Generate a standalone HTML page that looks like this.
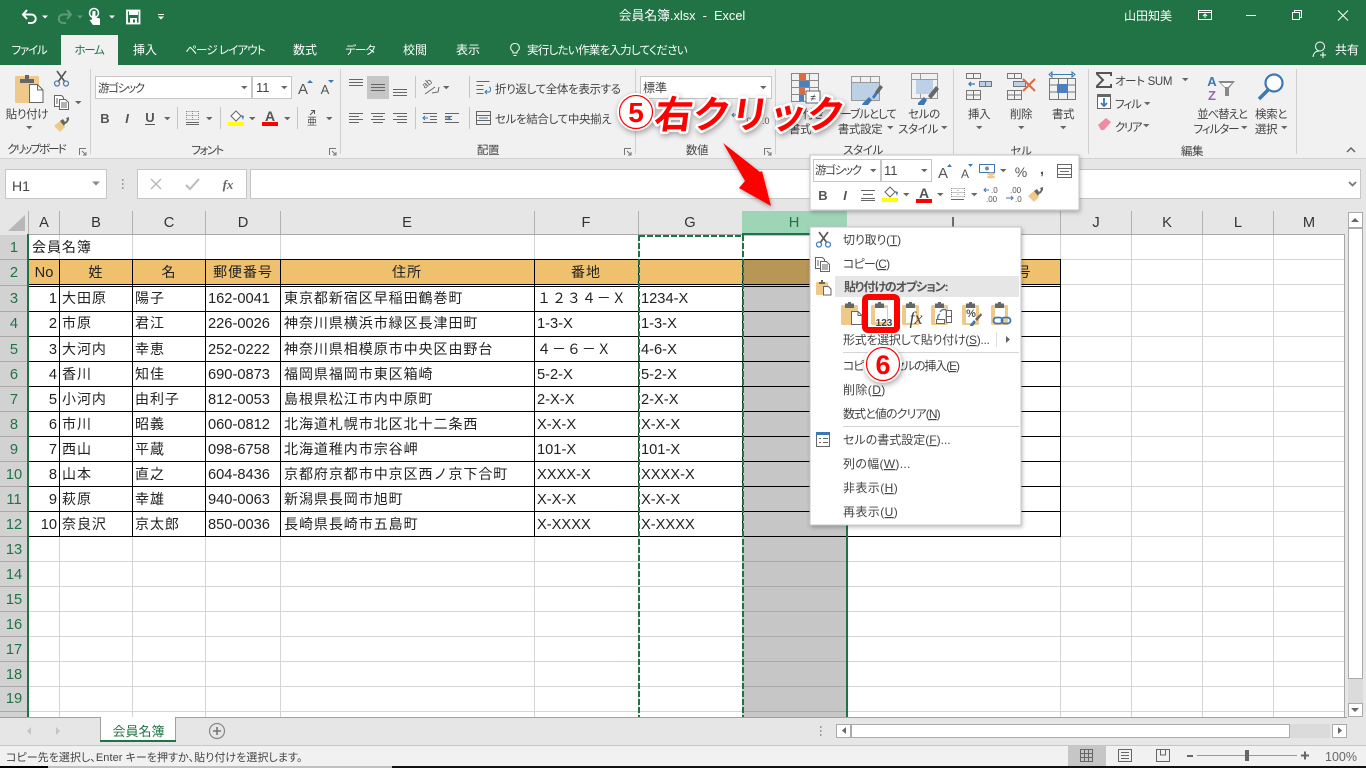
<!DOCTYPE html>
<html lang="ja"><head><meta charset="utf-8"><title>会員名簿.xlsx - Excel</title>
<style>
html,body{margin:0;padding:0;background:#fff;overflow:hidden}
svg{display:block}
text{font-family:"Liberation Sans","Noto Sans CJK JP",sans-serif;font-feature-settings:"palt"}
.u{font-size:11.5px;letter-spacing:-.35px;fill:#444}
.v{font-size:12px;fill:#444}
.w{font-size:12px;fill:#fff}
.tt{font-size:11.5px;fill:#fff;letter-spacing:-.9px}
.c{font-size:14.67px;fill:#222;font-feature-settings:normal}
.k{font-size:14px;fill:#222;letter-spacing:.95px;font-feature-settings:normal}
.h{font-size:14.67px;fill:#333;text-anchor:middle}
.r{font-size:14.67px;fill:#217346;text-anchor:middle}
</style></head><body>
<svg xmlns="http://www.w3.org/2000/svg" width="1366" height="768" viewBox="0 0 1366 768">
<defs>
<path id="tri" d="M0 0h6.5l-3.2 3.2z" fill="#666"/>
<g id="lnch" fill="none" stroke="#777"><path d="M.5 7V.5H7"/><path d="M3 3l4 4M7 4v3H4"/></g>
<g id="scis"><path d="M3 0l8 11M12 0L4 11" stroke="#555" stroke-width="1.6" fill="none"/><circle cx="3" cy="12.5" r="2.5" fill="none" stroke="#4a7fb5" stroke-width="1.3"/><circle cx="12" cy="12.5" r="2.5" fill="none" stroke="#4a7fb5" stroke-width="1.3"/></g>
<g id="copy" fill="#fff" stroke="#666"><path d="M.5.5h7l2 2v9H.5z"/><path d="M5.5 4.500h6l3 3v7h-9z"/><path d="M7 8h6M7 10h6M7 12h6M2 4h2M2 6h2M2 8h2" fill="none"/></g>
<g id="brush"><path d="M0 9l6-5 5 6-5 5z" fill="#eec989"/><path d="M6 4l3-2 2 3 2-2-1-2 3-1v3l-2 3-2 1-1 2z" fill="#666"/></g>
<g id="clip"><rect x="0" y="3" width="17" height="20" rx="1.500" fill="#eec989"/><path d="M4 1.500h3V0h3v1.500h3V6H4z" fill="#666"/></g>
<g id="paper"><path d="M.5.5h6.500l4 4v9H.5z" fill="#fff" stroke="#666"/><path d="M7 .5v4h4" fill="none" stroke="#666"/></g>
</defs>

<!-- title bar -->
<rect width="1366" height="65" fill="#217346"/>
<path d="M27 10l-4 4.500 4 4.500M23 14.500h8.500a4.200 4.200 0 0 1 0 8.500H28" fill="none" stroke="#fff" stroke-width="2"/>
<path d="M42 15.500h6l-3 3z" fill="#fff"/>
<path d="M67 10l4 4.500-4 4.500M71 14.500h-8a4.200 4.200 0 0 0 0 8.500h3" fill="none" stroke="#5d9a7b" stroke-width="2"/>
<path d="M77 15.500h6l-3 3z" fill="#5d9a7b"/>
<circle cx="94" cy="13" r="4.500" fill="none" stroke="#fff" stroke-width="1.500"/>
<path d="M92.500 11h3v6.500l4.500 1v6.500h-7l-3.500-5 2.500-.5z" fill="#fff"/>
<path d="M109 15.500h6l-3 3z" fill="#fff"/>
<rect x="127" y="10.500" width="12.500" height="13" fill="none" stroke="#fff" stroke-width="1.800"/>
<rect x="129" y="10" width="9" height="5" fill="#fff"/><rect x="130" y="18" width="7" height="5.500" fill="#fff"/><rect x="133" y="19.500" width="2" height="3" fill="#217346"/>
<path d="M158 14h6v1h-6zM158 16.500h6l-3 3z" fill="#fff"/>
<text x="682" y="20" text-anchor="middle" xml:space="preserve" style="font-size:12.8px;fill:#fff">会員名簿.xlsx  -  Excel</text>
<text class="w" x="1124" y="20">山田知美</text>
<path d="M1198.500 10.500h13v9h-13zM1198.500 12.500h13M1205 18v-4M1203 16l2-2 2 2" fill="none" stroke="#fff"/>
<rect x="1246" y="15" width="10" height="1" fill="#fff"/>
<path d="M1292.500 12.500h7v7h-7zM1294.500 12.500v-2h7v7h-2" fill="none" stroke="#fff"/>
<path d="M1338 10.500l10 10M1348 10.500l-10 10" stroke="#fff" fill="none"/>

<!-- tabs -->
<rect x="61" y="35" width="57" height="30" fill="#f1f1f1"/>
<text class="tt" x="29" y="54" text-anchor="middle" style="letter-spacing:-1.2px">ファイル</text>
<text x="89" y="54" text-anchor="middle" style="font-size:11.5px;letter-spacing:-1.3px;fill:#217346">ホーム</text>
<text class="w" x="145" y="54" text-anchor="middle">挿入</text>
<text class="tt" x="225" y="54" text-anchor="middle">ページ レイアウト</text>
<text class="w" x="305" y="54" text-anchor="middle">数式</text>
<text class="tt" x="360" y="54" text-anchor="middle">データ</text>
<text class="w" x="415" y="54" text-anchor="middle">校閲</text>
<text class="w" x="468" y="54" text-anchor="middle">表示</text>
<path d="M513 53v-1.500c-4-2.500-2.500-8 2-8s6 5.500 2 8V53zM513.500 55.500h3" fill="none" stroke="#fff"/>
<text class="tt" x="527" y="54" style="letter-spacing:-.72px">実行したい作業を入力してください</text>
<circle cx="1320" cy="46.500" r="4.500" fill="none" stroke="#fff"/>
<path d="M1313 57c.5-4 3-6 6-6M1323 52v6M1320 55h6" fill="none" stroke="#fff"/>
<text class="w" x="1335" y="54">共有</text>

<!-- ribbon -->
<rect y="65" width="1366" height="93" fill="#f1f1f1"/>
<rect y="158" width="1366" height="1" fill="#d2d2d2"/>
<path d="M90.500 69v85M340.500 69v85M635.500 69v85M775.500 69v85M953.500 69v85M1088.500 69v85M1296.500 69v85" stroke="#d0d0d0" fill="none"/>

<!-- clipboard -->
<rect x="15" y="76" width="24" height="27" rx="1.500" fill="#eec989"/>
<path d="M20 79h5v-4h4v4h5v4H20z" fill="#666"/>
<path d="M29.500 84.500h8l5.500 5.500v12.500H29.500z" fill="#fff" stroke="#666"/><path d="M37.500 84.500V90H43" fill="none" stroke="#666"/>
<text class="u" x="27" y="118" text-anchor="middle">貼り付け</text>
<use href="#tri" x="26" y="126"/>
<use href="#scis" x="54" y="71"/>
<use href="#copy" x="54" y="95"/>
<use href="#tri" x="75" y="101"/>
<use href="#brush" x="54" y="117"/>
<text class="u" x="36" y="153" text-anchor="middle" style="letter-spacing:-1.9px">クリップボード</text>
<use href="#lnch" x="79" y="148"/>

<!-- font -->
<rect x="95.500" y="76.500" width="156" height="22" fill="#fff" stroke="#c6c6c6"/>
<rect x="252.500" y="76.500" width="39" height="22" fill="#fff" stroke="#c6c6c6"/>
<text class="u" x="98" y="92" style="letter-spacing:-1.300px">游ゴシック</text><use href="#tri" x="241" y="86"/>
<text class="u" x="256" y="92" style="font-size:13px;letter-spacing:0">11</text><use href="#tri" x="281" y="86"/>
<text x="303" y="94" text-anchor="middle" style="font-size:15px;fill:#555">A</text><path d="M307 83h6l-3-3z" fill="#3c78b4"/>
<text x="325" y="94" text-anchor="middle" style="font-size:13px;fill:#555">A</text><path d="M328 80h6l-3 3z" fill="#3c78b4"/>
<text x="105" y="123" text-anchor="middle" style="font-size:13px;font-weight:700;fill:#555">B</text>
<text x="127" y="123" text-anchor="middle" style="font-size:13px;font-style:italic;font-weight:700;fill:#555">I</text>
<text x="150" y="122" text-anchor="middle" style="font-size:13px;font-weight:700;fill:#555">U</text><rect x="145" y="124" width="10" height="1" fill="#555"/>
<use href="#tri" x="164" y="117"/>
<path d="M177.500 107v22M220.500 107v22M297.500 107v22" stroke="#c6c6c6" fill="none"/>
<path d="M186.500 111.500h12M186.500 115.500h12M186.500 119.500h12M186.500 111v9M192.500 111v9M198.500 111v9" stroke="#888" stroke-dasharray="1 1" fill="none"/><path d="M186 122.500h13M186 124.500h13" stroke="#666" fill="none"/>
<use href="#tri" x="206" y="117"/>
<path d="M231 116l5-5 5 5-5 5z" fill="#fff" stroke="#666"/><path d="M241 115l3 1-1 4z" fill="#3c78b4"/>
<rect x="228" y="122" width="16" height="4" fill="#ff0"/>
<use href="#tri" x="249" y="117"/>
<text x="270" y="121" text-anchor="middle" style="font-size:14px;fill:#555;font-weight:700">A</text>
<rect x="262" y="122" width="16" height="4" fill="#f00"/>
<use href="#tri" x="284" y="117"/>
<text x="312" y="125" text-anchor="middle" style="font-size:10px;fill:#555">亜</text><path d="M310 115l4-4M311 110.500h3.500v3.500" stroke="#555" fill="none"/>
<use href="#tri" x="326" y="117"/>
<text class="u" x="207" y="154" text-anchor="middle" style="letter-spacing:-1.6px">フォント</text>
<use href="#lnch" x="329" y="148"/>

<!-- align -->
<rect x="367" y="76" width="22" height="23" fill="#c6c6c6"/>
<g stroke="#666" fill="none">
<path d="M349 79.500h14M349 82.500h14M349 85.500h14"/>
<path d="M371 84.500h14M371 87.500h14M371 90.500h14"/>
<path d="M393 89.500h14M393 92.500h14M393 95.500h14"/>
<path d="M349 113.500h14M349 116.500h10M349 119.500h14M349 122.500h10"/>
<path d="M371 113.500h14M373 116.500h10M371 119.500h14M373 122.500h10"/>
<path d="M393 113.500h14M397 116.500h10M393 119.500h14M397 122.500h10"/>
<path d="M423 113.500h14M430 116.500h7M430 119.500h7M423 122.500h14"/>
<path d="M445 113.500h14M445 116.500h7M445 119.500h7M445 122.500h14"/>
<path d="M415.500 76v22M415.500 107v22M469.500 76v22M469.500 107v22" stroke="#c6c6c6"/>
<path d="M425 94l10-7M432 93l6-1 1-5"/>
</g>
<text transform="translate(425 89) rotate(-40)" style="font-size:9px;fill:#555">ab</text>
<path d="M423 118h5M425 116l-2 2 2 2" stroke="#3c78b4" fill="none"/>
<path d="M445 118h5M448 116l2 2-2 2" stroke="#3c78b4" fill="none"/>
<use href="#tri" x="443" y="86"/>
<path d="M476.500 81.500h13M476.500 85.500h7M476.500 89.500h7M476.500 93.500h7" stroke="#666" fill="none"/><path d="M487 90l-2 2 2 2M485 92h4c2 0 2-5 0-5" stroke="#3c78b4" fill="none"/>
<text class="u" x="495" y="93">折り返して全体を表示する</text>
<rect x="476.500" y="111.500" width="14" height="13" fill="none" stroke="#666"/><path d="M476 115.500h15M476 120.500h15" stroke="#666"/><path d="M479 118h9" stroke="#3c78b4"/>
<text class="u" x="495" y="123">セルを結合して中央揃え</text>
<use href="#tri" x="621" y="117"/>
<text class="u" x="488" y="154" text-anchor="middle">配置</text>
<use href="#lnch" x="624" y="148"/>

<!-- number -->
<rect x="640.500" y="76.500" width="131" height="22" fill="#fff" stroke="#c6c6c6"/>
<text class="v" x="643" y="92">標準</text><use href="#tri" x="760" y="86"/>
<text x="744" y="124" style="font-size:9px;fill:#555">.00</text><text x="762" y="124" style="font-size:9px;fill:#555">.0</text>
<path d="M732 115h8M734 113l-2 2 2 2" stroke="#3c78b4" fill="none"/>
<text class="u" x="697" y="154" text-anchor="middle">数値</text>
<use href="#lnch" x="764" y="148"/>

<!-- styles -->
<g fill="none" stroke="#888"><path d="M791.500 73.500h27v28h-27zM791.500 80.500h27M791.500 87.500h27M791.500 94.500h27M800.500 73v29M809.500 73v29"/></g>
<rect x="799" y="74" width="7" height="6" fill="#de6a3e"/><rect x="799" y="81" width="10" height="6" fill="#4a80bd"/><rect x="799" y="88" width="6" height="6" fill="#de6a3e"/><rect x="799" y="95" width="5" height="6" fill="#4a80bd"/>
<rect x="806" y="91" width="14" height="12" fill="#fff" stroke="#666"/><text x="813" y="101" text-anchor="middle" style="font-size:10px;fill:#333">≠</text>
<text class="u" x="813" y="118" text-anchor="middle">付き</text>
<text class="u" x="800" y="133" text-anchor="middle">書式</text>
<g fill="none" stroke="#999"><path d="M851.500 76.500h28v24h-28zM851.500 82.500h28M851.500 88.500h28M851.500 94.500h28M860.500 76v25M870.500 76v25"/></g>
<rect x="852" y="83" width="27" height="17" fill="#bcd0e6"/>
<path d="M863 103l6-6 3 3-4 5h-6zM872 97l7-10 2 2-7 10z" fill="#3c78b4"/><path d="M875 92l5-7 3 2-5 7z" fill="#666"/>
<text class="u" x="896" y="118" text-anchor="end" style="letter-spacing:-1px">テーブルとして</text>
<text class="u" x="860" y="133" text-anchor="middle">書式設定</text><use href="#tri" x="887" y="126"/>
<g fill="none" stroke="#999"><path d="M911.500 73.500h26v25h-26zM911.500 79.500h26M920.500 73v26"/></g>
<rect x="916" y="80" width="17" height="14" fill="#bcd0e6"/>
<path d="M918 103l6-6 3 3-3 5h-6z" fill="#3c78b4"/><path d="M928 96l8-10 3 3-8 10z" fill="#666"/>
<text class="u" x="924" y="118" text-anchor="middle">セルの</text>
<text class="u" x="918" y="133" text-anchor="middle">スタイル</text><use href="#tri" x="941" y="126"/>
<text class="u" x="863" y="154" text-anchor="middle">スタイル</text>

<!-- cells -->
<g fill="none" stroke="#777">
<path d="M966.500 73.500h14v5h-14zM973.500 73v5M966.500 90.500h14v9h-14zM966.500 95h14M973.500 90v10"/>
<path d="M979.500 81.500h12v5h-12zM985.500 81v6" fill="#bcd0e6"/>
<path d="M1007.500 73.500h14v5h-14zM1014.500 73v5M1007.500 90.500h14v9h-14zM1007.500 95h14M1014.500 90v10"/>
<path d="M1013.500 81.500h12v5h-12z" fill="#bcd0e6"/>
<path d="M1049.500 78.500h26v21h-26zM1058.500 78v21M1067.500 78v21M1049.500 85h26M1049.500 92h26"/>
</g>
<path d="M975 84h-6M971 82l-2 2 2 2" fill="none" stroke="#3c78b4" stroke-width="1.300"/>
<path d="M1023 79l12 12M1035 79l-12 12" stroke="#de6a3e" stroke-width="2"/>
<rect x="1057" y="84" width="10" height="9" fill="#4a80bd"/>
<path d="M1051 74.500h22M1049 74.500l3-2.500v5zM1075 74.500l-3-2.500v5z" stroke="#3c78b4" fill="none"/>
<text class="u" x="979" y="118" text-anchor="middle">挿入</text><use href="#tri" x="976" y="126"/>
<text class="u" x="1021" y="118" text-anchor="middle">削除</text><use href="#tri" x="1018" y="126"/>
<text class="u" x="1063" y="118" text-anchor="middle">書式</text><use href="#tri" x="1060" y="126"/>
<text class="u" x="1021" y="155" text-anchor="middle">セル</text>

<!-- edit -->
<path d="M1111 76v-3h-14v1l6 6-6 6v1h14v-3" fill="none" stroke="#555" stroke-width="2"/>
<text class="u" x="1115" y="85">オート SUM</text><use href="#tri" x="1182" y="78"/>
<rect x="1097.500" y="94.500" width="13" height="14" fill="#fff" stroke="#666"/><rect x="1097" y="94" width="14" height="3" fill="#666"/>
<path d="M1104 98v8M1101 103l3 3 3-3" fill="none" stroke="#3c78b4" stroke-width="1.800"/>
<text class="u" x="1115" y="108" style="letter-spacing:-1.100px">フィル</text><use href="#tri" x="1144" y="102"/>
<path d="M1098 125l8-7 5 4-7 8h-3z" fill="#ee8ca0"/>
<text class="u" x="1115" y="131" style="letter-spacing:-1.500px">クリア</text><use href="#tri" x="1143" y="124"/>
<text x="1212" y="86" text-anchor="middle" style="font-size:13px;font-weight:700;fill:#3c78b4">A</text>
<text x="1212" y="100" text-anchor="middle" style="font-size:13px;font-weight:700;fill:#9966bb">Z</text>
<path d="M1218 81h17l-6 7v8h-4v-8z" fill="#888"/><path d="M1221 83h11l-4 4h-3z" fill="#fff"/>
<text class="u" x="1222" y="118" text-anchor="middle" style="letter-spacing:-1.100px">並べ替えと</text>
<text class="u" x="1216" y="133" text-anchor="middle" style="letter-spacing:-1.100px">フィルター</text><use href="#tri" x="1241" y="126"/>
<circle cx="1274" cy="83" r="8.500" fill="#fff" stroke="#3c78b4" stroke-width="2.200"/>
<path d="M1268 90l-9 9" stroke="#3c78b4" stroke-width="3.500"/>
<text class="u" x="1271" y="118" text-anchor="middle">検索と</text>
<text class="u" x="1266" y="133" text-anchor="middle">選択</text><use href="#tri" x="1281" y="126"/>
<text class="u" x="1192" y="155" text-anchor="middle">編集</text>
<path d="M1347 152l4-4 4 4" fill="none" stroke="#666" stroke-width="1.500"/>

<!-- formula bar -->
<rect y="159" width="1366" height="52" fill="#e6e6e6"/>
<rect x="5.500" y="169.500" width="101" height="29" fill="#fff" stroke="#c6c6c6"/>
<text x="12" y="191" style="font-size:14px;fill:#444">H1</text>
<path d="M92 181.500h8l-4 4z" fill="#888"/>
<path d="M122 179h1.500v2H122zM122 183h1.500v2H122zM122 187h1.500v2H122z" fill="#999"/>
<rect x="137.500" y="169.500" width="109" height="29" fill="#fff" stroke="#c6c6c6"/>
<path d="M151 179l10 10M161 179l-10 10" stroke="#bbb" stroke-width="1.500"/>
<path d="M186 185l4 4 9-10" fill="none" stroke="#bbb" stroke-width="2"/>
<text x="228" y="189" text-anchor="middle" style="font-family:'Liberation Serif',serif;font-size:13px;font-style:italic;font-weight:700;fill:#666">fx</text>
<rect x="250.500" y="169.500" width="1110" height="29" fill="#fff" stroke="#c6c6c6"/>
<path d="M1349 182l3.500 3.500 3.500-3.500" fill="none" stroke="#777" stroke-width="1.800"/>

<!-- column headers -->
<rect y="211" width="1345" height="24" fill="#e6e6e6"/>
<path d="M8 231l17-16v16z" fill="#b7b7b7"/>
<rect x="742" y="211" width="105" height="22" fill="#9fd5b7"/>
<rect x="28" y="234" width="1317" height="1" fill="#a8a8a8"/>
<rect x="742" y="233" width="105" height="2" fill="#217346"/>
<path d="M28.500 211v23M59.500 211v23M132.500 211v23M205.500 211v23M280.500 211v23M534.500 211v23M638.500 211v23M1060.500 211v23M1131.500 211v23M1202.500 211v23M1273.500 211v23" stroke="#b1b1b1" fill="none"/>
<text class="h" x="44" y="227">A</text><text class="h" x="96" y="227">B</text><text class="h" x="169" y="227">C</text><text class="h" x="243" y="227">D</text><text class="h" x="407" y="227">E</text><text class="h" x="586" y="227">F</text><text class="h" x="690" y="227">G</text>
<text class="h" x="794" y="227" style="fill:#217346">H</text>
<text class="h" x="953" y="227">I</text><text class="h" x="1096" y="227">J</text><text class="h" x="1167" y="227">K</text><text class="h" x="1238" y="227">L</text><text class="h" x="1309" y="227">M</text>

<!-- sheet -->
<rect x="29" y="235" width="1316" height="482" fill="#fff"/>
<rect y="235" width="27" height="482" fill="#d2d2d2"/>
<rect x="27" y="234" width="2" height="483" fill="#217346"/>
<rect x="742" y="235" width="105" height="482" fill="#c6c6c6"/>
<rect x="743" y="236" width="103" height="23" fill="#fff"/>
<rect x="59" y="260" width="1001" height="25" fill="#efc16f"/>
<rect x="29" y="260" width="31" height="25" fill="#efc16f"/>
<rect x="743" y="260" width="103" height="24" fill="#b89656"/>
<!-- light grid -->
<g fill="none" stroke="#d4d4d4">
<path d="M59.500 235V259M132.500 235V259M205.500 235V259M280.500 235V259M534.500 235V259M638.500 235V259M1060.500 235V717M1131.500 235V717M1202.500 235V717M1273.500 235V717M1344.500 235V717"/>
<path d="M59.500 537V717M132.500 537V717M205.500 537V717M280.500 537V717M534.500 537V717M638.500 537V717"/>
<path d="M846 259.500H1345M846 284.500H1345M846 311.500H1345M846 336.500H1345M846 361.500H1345M846 386.500H1345M846 411.500H1345M846 436.500H1345M846 461.500H1345M846 486.500H1345M846 511.500H1345M29 259.500H1060"/>
<path d="M29 561.500H742M29 586.500H742M29 611.500H742M29 636.500H742M29 661.500H742M29 686.500H742M29 711.500H742M29 536.500H742M846 536.500H1345M846 561.500H1345M846 586.500H1345M846 611.500H1345M846 636.500H1345M846 661.500H1345M846 686.500H1345M846 711.500H1345"/>
</g>
<path d="M742 561.500H846M742 586.500H846M742 611.500H846M742 636.500H846M742 661.500H846M742 686.500H846M742 711.500H846" stroke="#aaa" fill="none"/>
<path d="M0 259.500H27M0 285.500H27M0 311.500H27M0 336.500H27M0 361.500H27M0 386.500H27M0 411.500H27M0 436.500H27M0 461.500H27M0 486.500H27M0 511.500H27M0 536.500H27M0 561.500H27M0 586.500H27M0 611.500H27M0 636.500H27M0 661.500H27M0 686.500H27M0 711.500H27" stroke="#aaa" fill="none"/>
<!-- table -->
<g fill="none" stroke="#000">
<path d="M29 259.500H1061M29 284.500H1061M29 286.500H1061M29 311.500H1061M29 336.500H1061M29 361.500H1061M29 386.500H1061M29 411.500H1061M29 436.500H1061M29 461.500H1061M29 486.500H1061M29 511.500H1061M29 536.500H1061"/>
<path d="M59.500 259V537M132.500 259V537M205.500 259V537M280.500 259V537M534.500 259V537M638.500 259V537M742.500 259V537M846.500 259V537M1060.500 259V537"/>
</g>
<!-- copy marquee -->
<g fill="none" stroke="#217346" stroke-width="2" stroke-dasharray="6 2">
<path d="M639 235V717"/><path d="M743 235V717"/><path d="M639 236H743"/>
</g>
<rect x="846" y="235" width="2" height="482" fill="#217346"/>

<!-- row numbers -->
<text class="r" x="14" y="252">1</text><text class="r" x="14" y="277">2</text><text class="r" x="14" y="303">3</text><text class="r" x="14" y="328">4</text><text class="r" x="14" y="354">5</text><text class="r" x="14" y="379">6</text><text class="r" x="14" y="404">7</text><text class="r" x="14" y="429">8</text><text class="r" x="14" y="454">9</text><text class="r" x="14" y="479">10</text><text class="r" x="14" y="504">11</text><text class="r" x="14" y="529">12</text><text class="r" x="14" y="554">13</text><text class="r" x="14" y="579">14</text><text class="r" x="14" y="604">15</text><text class="r" x="14" y="629">16</text><text class="r" x="14" y="654">17</text><text class="r" x="14" y="679">18</text><text class="r" x="14" y="703">19</text>

<!-- cell text -->
<text class="k" x="32" y="252">会員名簿</text>
<text class="c" x="44" y="277" text-anchor="middle">No</text>
<text class="k" x="96" y="277" text-anchor="middle">姓</text>
<text class="k" x="169" y="277" text-anchor="middle">名</text>
<text class="k" x="243" y="277" text-anchor="middle">郵便番号</text>
<text class="k" x="407" y="277" text-anchor="middle">住所</text>
<text class="k" x="586" y="277" text-anchor="middle">番地</text>
<text class="k" x="1024" y="277" text-anchor="middle">号</text>

<g text-anchor="end">
<text class="c" x="57" y="303">1</text><text class="c" x="57" y="328">2</text><text class="c" x="57" y="354">3</text><text class="c" x="57" y="379">4</text><text class="c" x="57" y="404">5</text><text class="c" x="57" y="429">6</text><text class="c" x="57" y="454">7</text><text class="c" x="57" y="479">8</text><text class="c" x="57" y="504">9</text><text class="c" x="57" y="529">10</text>
</g>
<text class="k" x="62" y="303">大田原</text><text class="k" x="135" y="303">陽子</text><text class="c" x="208" y="303">162-0041</text><text class="k" x="284" y="303">東京都新宿区早稲田鶴巻町</text><text class="k" x="537" y="303">１２３４－Ｘ</text><text class="c" x="641" y="303">1234-X</text>
<text class="k" x="62" y="328">市原</text><text class="k" x="135" y="328">君江</text><text class="c" x="208" y="328">226-0026</text><text class="k" x="284" y="328">神奈川県横浜市緑区長津田町</text><text class="c" x="537" y="328">1-3-X</text><text class="c" x="641" y="328">1-3-X</text>
<text class="k" x="62" y="354">大河内</text><text class="k" x="135" y="354">幸恵</text><text class="c" x="208" y="354">252-0222</text><text class="k" x="284" y="354">神奈川県相模原市中央区由野台</text><text class="k" x="537" y="354">４－６－Ｘ</text><text class="c" x="641" y="354">4-6-X</text>
<text class="k" x="62" y="379">香川</text><text class="k" x="135" y="379">知佳</text><text class="c" x="208" y="379">690-0873</text><text class="k" x="284" y="379">福岡県福岡市東区箱崎</text><text class="c" x="537" y="379">5-2-X</text><text class="c" x="641" y="379">5-2-X</text>
<text class="k" x="62" y="404">小河内</text><text class="k" x="135" y="404">由利子</text><text class="c" x="208" y="404">812-0053</text><text class="k" x="284" y="404">島根県松江市内中原町</text><text class="c" x="537" y="404">2-X-X</text><text class="c" x="641" y="404">2-X-X</text>
<text class="k" x="62" y="429">市川</text><text class="k" x="135" y="429">昭義</text><text class="c" x="208" y="429">060-0812</text><text class="k" x="284" y="429">北海道札幌市北区北十二条西</text><text class="c" x="537" y="429">X-X-X</text><text class="c" x="641" y="429">X-X-X</text>
<text class="k" x="62" y="454">西山</text><text class="k" x="135" y="454">平蔵</text><text class="c" x="208" y="454">098-6758</text><text class="k" x="284" y="454">北海道稚内市宗谷岬</text><text class="c" x="537" y="454">101-X</text><text class="c" x="641" y="454">101-X</text>
<text class="k" x="62" y="479">山本</text><text class="k" x="135" y="479">直之</text><text class="c" x="208" y="479">604-8436</text><text class="k" x="284" y="479">京都府京都市中京区西ノ京下合町</text><text class="c" x="537" y="479">XXXX-X</text><text class="c" x="641" y="479">XXXX-X</text>
<text class="k" x="62" y="504">萩原</text><text class="k" x="135" y="504">幸雄</text><text class="c" x="208" y="504">940-0063</text><text class="k" x="284" y="504">新潟県長岡市旭町</text><text class="c" x="537" y="504">X-X-X</text><text class="c" x="641" y="504">X-X-X</text>
<text class="k" x="62" y="529">奈良沢</text><text class="k" x="135" y="529">京太郎</text><text class="c" x="208" y="529">850-0036</text><text class="k" x="284" y="529">長崎県長崎市五島町</text><text class="c" x="537" y="529">X-XXXX</text><text class="c" x="641" y="529">X-XXXX</text>

<!-- vertical scrollbar -->
<rect x="1345" y="211" width="21" height="506" fill="#e6e6e6"/>
<rect x="1344" y="234" width="1" height="483" fill="#a8a8a8"/>
<rect x="1348" y="228" width="15" height="475" fill="#dbdbdb"/>
<rect x="1348.500" y="212.500" width="14" height="15" fill="#fff" stroke="#ababab"/>
<path d="M1351 222h8l-4-4z" fill="#666"/>
<rect x="1348.500" y="228.500" width="14" height="450" fill="#fff" stroke="#ababab"/>
<rect x="1348.500" y="703.500" width="14" height="13" fill="#fff" stroke="#ababab"/>
<path d="M1351 708h8l-4 4z" fill="#666"/>

<!-- sheet tabs -->
<rect y="717" width="1366" height="28" fill="#e6e6e6"/>
<rect y="717" width="1347" height="1" fill="#a0a0a0"/>
<path d="M31 727v8l-4-4zM56 727v8l4-4z" fill="#c4c4c4"/>
<rect x="100" y="717" width="76" height="25" fill="#fff"/>
<path d="M100.500 717v25M175.500 717v25" stroke="#a0a0a0" fill="none"/>
<rect x="100" y="740" width="76" height="2" fill="#217346"/>
<text x="138.500" y="736" text-anchor="middle" style="font-size:13px;fill:#217346;font-feature-settings:normal">会員名簿</text>
<circle cx="217" cy="731" r="7.500" fill="none" stroke="#888" stroke-width="1.200"/><path d="M213 731h8M217 727v8" stroke="#777" stroke-width="1.600"/>
<path d="M820 726h1.500v2H820zM820 730h1.500v2H820zM820 734h1.500v2H820z" fill="#999"/>
<rect x="851" y="724" width="479" height="14" fill="#dbdbdb"/>
<rect x="836.500" y="724.500" width="14" height="13" fill="#fff" stroke="#ababab"/><path d="M846 727v7l-4-3.500z" fill="#666"/>
<rect x="851.500" y="724.500" width="438" height="13" fill="#fff" stroke="#ababab"/>
<rect x="1332.500" y="724.500" width="14" height="13" fill="#fff" stroke="#ababab"/><path d="M1338 727v7l4-3.500z" fill="#666"/>

<!-- status bar -->
<rect y="745" width="1366" height="21" fill="#f1f1f1"/>
<rect y="745" width="1366" height="1" fill="#c6c6c6"/>
<rect y="766" width="1366" height="2" fill="#c0c0c0"/>
<rect y="766" width="48" height="2" fill="#000"/><rect x="392" y="766" width="974" height="2" fill="#111"/>
<text x="6" y="761" style="font-size:11px;letter-spacing:.05px;fill:#444">コピー先を選択し、Enter キーを押すか、貼り付けを選択します。</text>
<rect x="1068" y="746" width="38" height="20" fill="#c6c6c6"/>
<path d="M1080.500 749.500h12v12h-12zM1080.500 753.500h12M1080.500 757.500h12M1084.500 749v13M1088.500 749v13" fill="none" stroke="#666"/>
<path d="M1118.500 749.500h13v12h-13zM1121 752.500h8M1121 755.500h8M1121 758.500h8" fill="none" stroke="#666"/>
<path d="M1156.500 749.500h13v12h-13zM1160.500 749v6h5v-6" fill="none" stroke="#666"/>
<rect x="1187" y="755" width="6" height="2" fill="#666"/>
<rect x="1197" y="755" width="100" height="1" fill="#999"/>
<rect x="1245" y="750" width="4" height="11" fill="#666"/>
<path d="M1301 755.500h8M1305 751.500v8" stroke="#666" stroke-width="2"/>
<text x="1325" y="761" style="font-size:12.5px;fill:#666">100%</text>

<!-- mini toolbar -->
<rect x="810" y="155" width="269" height="55" fill="#fff" stroke="#c6c6c6" style="filter:drop-shadow(1px 2px 2px rgba(0,0,0,.25))"/>
<rect x="813.500" y="159.500" width="67" height="22" fill="#fff" stroke="#c6c6c6"/>
<rect x="881.500" y="159.500" width="50" height="22" fill="#fff" stroke="#c6c6c6"/>
<text class="u" x="815" y="174" style="letter-spacing:-1.300px">游ゴシック</text><use href="#tri" x="870" y="169"/>
<text class="u" x="884" y="175" style="font-size:13px;letter-spacing:0">11</text><use href="#tri" x="921" y="169"/>
<text x="943" y="178" text-anchor="middle" style="font-size:15px;fill:#555">A</text><path d="M947 167h5l-2.500-3z" fill="#3c78b4"/>
<text x="965" y="178" text-anchor="middle" style="font-size:12px;fill:#555">A</text><path d="M968 164h5l-2.500 3z" fill="#3c78b4"/>
<rect x="979.500" y="164.500" width="15" height="8" fill="#fff" stroke="#3c78b4"/><circle cx="987" cy="168.500" r="2" fill="#888"/><ellipse cx="991" cy="174" rx="4" ry="1.500" fill="#eec989"/><ellipse cx="991" cy="177" rx="4" ry="1.500" fill="#eec989"/>
<use href="#tri" x="1000" y="169"/>
<text x="1021" y="177" text-anchor="middle" style="font-size:14px;fill:#555">%</text>
<text x="1042" y="174" text-anchor="middle" style="font-size:15px;font-weight:700;fill:#555">,</text>
<rect x="1057.500" y="164.500" width="14" height="13" fill="#fff" stroke="#666"/><path d="M1057 168.500h15M1057 174.500h15" stroke="#666"/><path d="M1060 171.500h9" stroke="#3c78b4"/>
<text x="823" y="200" text-anchor="middle" style="font-size:13px;font-weight:700;fill:#555">B</text>
<text x="845" y="200" text-anchor="middle" style="font-size:13px;font-weight:700;font-style:italic;fill:#555">I</text>
<path d="M861 190.500h14M863 194.500h10M861 198.500h14M861 200.500h14" stroke="#666" fill="none"/>
<path d="M885 192l5-5 5 5-5 5z" fill="#fff" stroke="#666"/><path d="M895 191l3 1-1 4z" fill="#3c78b4"/>
<rect x="882" y="198" width="16" height="4" fill="#ff0"/>
<use href="#tri" x="903" y="193"/>
<text x="924" y="198" text-anchor="middle" style="font-size:14px;font-weight:700;fill:#555">A</text>
<rect x="916" y="199" width="16" height="4" fill="#f00"/>
<use href="#tri" x="937" y="193"/>
<path d="M951.500 188.500h13M951.500 192.500h13M951.500 196.500h13M951.500 188v9M958 188v9M964.500 188v9" stroke="#888" stroke-dasharray="1 1" fill="none"/><path d="M951 199.500h13" stroke="#666" fill="none"/>
<use href="#tri" x="971" y="193"/>
<path d="M984 190h5M986 188l-2 2 2 2" stroke="#3c78b4" fill="none"/><text x="991" y="193" style="font-size:8px;fill:#555">.0</text><text x="986" y="202" style="font-size:8px;fill:#555">.00</text>
<text x="1010" y="193" style="font-size:8px;fill:#555">.00</text><path d="M1006 198h7M1011 196l2 2-2 2" stroke="#3c78b4" fill="none"/><text x="1015" y="202" style="font-size:8px;fill:#555">.0</text>
<use href="#brush" x="1028" y="187"/>

<!-- context menu -->
<rect x="810" y="227" width="211" height="298" fill="#fff" stroke="#c6c6c6" style="filter:drop-shadow(1px 2px 2px rgba(0,0,0,.25))"/>
<use href="#scis" x="816" y="232"/>
<text class="v" x="843" y="244" style="letter-spacing:-.2px">切り取り(<tspan text-decoration="underline">T</tspan>)</text>
<use href="#copy" x="815" y="257"/>
<text class="v" x="843" y="268" style="letter-spacing:-.8px">コピー(<tspan text-decoration="underline">C</tspan>)</text>
<rect x="835" y="276" width="184" height="21" fill="#e6e6e6"/>
<rect x="816" y="282" width="12" height="13" rx="1" fill="#eec989"/><path d="M819 282h2v-2h2v2h2v2h-6z" fill="#666"/>
<path d="M823.500 286.500h5l2.500 2.500v6h-7.500z" fill="#fff" stroke="#666"/>
<text x="844" y="291" style="font-size:12px;font-weight:700;letter-spacing:-1.050px;fill:#555">貼り付けのオプション:</text>

<!-- paste option icons -->
<use href="#clip" x="841" y="302"/><use href="#paper" x="851" y="311"/>
<rect x="865" y="297" width="32" height="33" rx="3" fill="#fff" stroke="#f00" stroke-width="6"/>
<use href="#clip" x="871" y="302"/>
<rect x="875" y="308" width="12" height="14" fill="#fff"/>
<text x="884" y="326" text-anchor="middle" style="font-size:10px;font-weight:700;fill:#444">123</text>
<use href="#clip" x="902" y="302"/><rect x="906" y="308" width="10" height="15" fill="#fff"/>
<text x="916" y="324" text-anchor="middle" style="font-family:'Liberation Serif',serif;font-size:18px;font-style:italic;fill:#444">fx</text>
<use href="#clip" x="931" y="302"/><rect x="935" y="308" width="10" height="15" fill="#fff"/>
<path d="M940 312c2-3 4-3 6-2M938 320c-1-3 0-5 2-6" stroke="#3c78b4" fill="none" stroke-width="1.300"/><path d="M946.500 310.500h5v12h-5zM946.500 316.500h5M936.500 319.500h8v4h-8z" fill="#fff" stroke="#666"/>
<use href="#clip" x="962" y="302"/><rect x="966" y="308" width="10" height="15" fill="#fff"/>
<text x="971" y="317" text-anchor="middle" style="font-size:11px;font-weight:700;fill:#555">%</text>
<path d="M970 325l4-5 2 2-3 4h-3z" fill="#3c78b4"/><path d="M975 319l6-6 1 2-5 6z" fill="#666"/>
<use href="#clip" x="991" y="302"/><rect x="995" y="308" width="10" height="10" fill="#fff"/>
<rect x="993.500" y="317.500" width="9" height="6" rx="3" fill="#fff" stroke="#3c78b4" stroke-width="1.800"/><rect x="1001.500" y="317.500" width="9" height="6" rx="3" fill="none" stroke="#3c78b4" stroke-width="1.800"/>

<text class="v" x="843" y="344" style="letter-spacing:-.3px">形式を選択して貼り付け(<tspan text-decoration="underline">S</tspan>)...</text>
<path d="M996.500 332v15" stroke="#ddd"/><path d="M1006 336v7l4-3.500z" fill="#666"/>
<rect x="843" y="352" width="176" height="1" fill="#d4d4d4"/>
<text class="v" x="843" y="370" style="letter-spacing:-1.100px">コピーしたセルの挿入(<tspan text-decoration="underline">E</tspan>)</text>
<text class="v" x="843" y="394" style="letter-spacing:.4px">削除(<tspan text-decoration="underline">D</tspan>)</text>
<text class="v" x="843" y="418" style="letter-spacing:-.9px">数式と値のクリア(<tspan text-decoration="underline">N</tspan>)</text>
<rect x="843" y="426" width="176" height="1" fill="#d4d4d4"/>
<rect x="816.500" y="433.500" width="13" height="13" fill="#fff" stroke="#666"/><rect x="816" y="432" width="14" height="3" fill="#3c78b4"/>
<path d="M819 438.500h2M823 438.500h5M819 442.500h2M823 442.500h5" stroke="#666"/>
<text class="v" x="843" y="444">セルの書式設定(<tspan text-decoration="underline">F</tspan>)...</text>
<text class="v" x="843" y="468" style="letter-spacing:.3px">列の幅(<tspan text-decoration="underline">W</tspan>)...</text>
<text class="v" x="843" y="492" style="letter-spacing:.4px">非表示(<tspan text-decoration="underline">H</tspan>)</text>
<text class="v" x="843" y="516" style="letter-spacing:.4px">再表示(<tspan text-decoration="underline">U</tspan>)</text>

<!-- annotations -->
<path d="M723 143L760 172 762 171 771 206 739 188 745 181Z" fill="#f00" style="filter:drop-shadow(1px 2px 2px rgba(0,0,0,.35))"/>
<g style="filter:drop-shadow(1px 2px 3px rgba(0,0,0,.35))">
<circle cx="636" cy="112" r="19" fill="#fff"/>
<circle cx="636" cy="112" r="16.500" fill="#fff" stroke="#f00" stroke-width="1.200"/>
<text x="636" y="122" text-anchor="middle" style="font-size:28px;font-weight:700;fill:#f00">5</text>
<circle cx="883" cy="364" r="19" fill="#fff"/>
<circle cx="883" cy="364" r="16.500" fill="#fff" stroke="#f00" stroke-width="1.200"/>
<text x="883" y="374" text-anchor="middle" style="font-size:27px;font-weight:700;fill:#f00">6</text>
<text transform="translate(653 128) skewX(-8)" style="font-family:'Noto Sans CJK JP','Liberation Sans',sans-serif;font-size:38px;font-weight:700;fill:#f00;stroke:#fff;stroke-width:5px;paint-order:stroke;stroke-linejoin:round;font-feature-settings:normal">右クリック</text>
</g>
</svg>
</body></html>
